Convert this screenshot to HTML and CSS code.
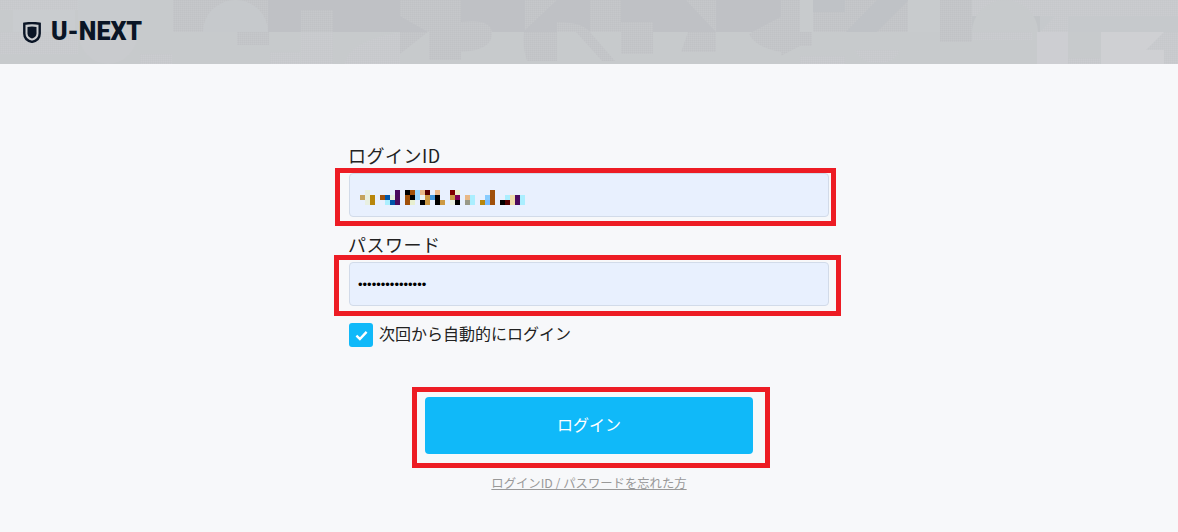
FILE: index.html
```html
<!DOCTYPE html>
<html lang="ja">
<head>
<meta charset="utf-8">
<title>U-NEXT ログイン</title>
<link rel="stylesheet" href="styles.css">
</head>
<body>
<header class="site-header">
  <svg class="header-art" viewBox="0 0 1178 64" preserveAspectRatio="none" aria-hidden="true">
    <defs>
      <pattern id="dither" width="2" height="2" patternUnits="userSpaceOnUse">
        <rect width="2" height="2" fill="#c3c5c8"/>
        <rect width="1" height="1" fill="#c0c2c5"/>
        <rect x="1" y="1" width="1" height="1" fill="#c6c8cb"/>
      </pattern>
      <pattern id="ditherlight" width="2" height="2" patternUnits="userSpaceOnUse">
        <rect width="2" height="2" fill="#c8cacd"/>
        <rect width="1" height="1" fill="#c6c8cb"/>
        <rect x="1" y="1" width="1" height="1" fill="#cbccd0"/>
      </pattern>
    </defs>
    <rect width="1178" height="64" fill="#c7cacc"/>
    <rect x="173" y="0" width="640" height="32" fill="#bfc1c5"/>
    <rect x="813" y="0" width="95" height="32" fill="#bfc2c6"/>
    <rect x="940" y="0" width="100" height="32" fill="#c1c4c7"/>
    <rect x="1040" y="0" width="138" height="32" fill="#c6c9cc"/>
    <rect x="0" y="0" width="78" height="10" fill="url(#ditherlight)"/>
    <rect x="13" y="10" width="62" height="22" fill="#c9cccf"/>
    <rect x="0" y="32" width="78" height="22" fill="url(#ditherlight)"/>
    <rect x="78" y="0" width="62" height="32" fill="#c8cbce"/>
    <path d="M78 32h60a30 32 0 0 1-60 0z" fill="#c9cbce"/>
    <rect x="140" y="54" width="32" height="10" fill="url(#ditherlight)"/>
    <rect x="173" y="0" width="95" height="32" fill="url(#dither)"/>
    <path d="M203 32a32.500 32 0 0 1 65 0z" fill="#c6c9cc"/>
    <rect x="237" y="32" width="32" height="13" fill="url(#dither)"/>
    <rect x="270" y="52" width="30" height="12" fill="url(#ditherlight)"/>
    <rect x="301" y="10" width="32" height="22" fill="url(#dither)"/>
    <rect x="301" y="32" width="32" height="32" fill="url(#ditherlight)"/>
    <path d="M345 64q2-22 55-32v32z" fill="url(#ditherlight)"/>
    <path d="M400 0h61v32h-61l28 0-28-16z" fill="url(#dither)"/>
    <path d="M400 32h28l-28 22z" fill="url(#dither)"/>
    <rect x="429" y="32" width="32" height="28" fill="url(#dither)"/>
    <path d="M461 52V22q31-4 31 12t-31 18z" fill="url(#dither)"/>
    <path d="M525 32V30L557 0h-32z" fill="url(#dither)"/>
    <path d="M557 22q25 0 33 10h-33z" fill="url(#dither)"/>
    <path d="M524 32h33v29h-30q-5-15-3-29z" fill="url(#dither)"/>
    <path d="M590 32l25 29h-13l-26-29z" fill="url(#dither)"/>
    <path d="M590 0h31v22h32v32h-32V32h-31z" fill="url(#dither)"/>
    <path d="M686 0h30v32z" fill="url(#dither)"/>
    <path d="M688 32h28v20h-35z" fill="url(#dither)"/>
    <path d="M781 17v35q-25-4-32-18 12-7 32-17z" fill="url(#dither)"/>
    <rect x="781" y="0" width="19" height="32" fill="url(#dither)"/>
    <path d="M781 32h19v14l-19 10z" fill="url(#dither)"/>
    <rect x="800" y="0" width="13" height="32" fill="#c8cbcd"/>
    <rect x="813" y="12" width="32" height="20" fill="url(#dither)"/>
    <rect x="845" y="0" width="63" height="32" fill="url(#dither)"/>
    <path d="M846 32L877 0h32L877 32z" fill="#bfc2c6"/>
    <rect x="800" y="32" width="12" height="14" fill="url(#dither)"/>
    <rect x="800" y="56" width="45" height="8" fill="url(#ditherlight)"/>
    <path d="M855 50h45q-5 13-22 13t-23-13z" fill="url(#ditherlight)"/>
    <rect x="908" y="0" width="32" height="32" fill="#c8cbcd"/>
    <rect x="940" y="0" width="32" height="42" fill="url(#dither)"/>
    <path d="M972 0h128v16h-128z" fill="url(#ditherlight)"/>
    <path d="M972 32a33 32 0 0 1 66 0z" fill="#c7cacc"/>
    <rect x="972" y="32" width="60" height="8" fill="url(#ditherlight)"/>
    <path d="M1040 32l15-16h13v16z" fill="url(#ditherlight)"/>
    <rect x="1100" y="0" width="78" height="16" fill="url(#ditherlight)"/>
    <rect x="1037" y="32" width="31" height="32" fill="#cdced2"/>
    <rect x="1101" y="32" width="63" height="32" fill="#cfd0d3"/>
    <path d="M1164 32l-18 18h18z" fill="url(#ditherlight)"/>
    <rect x="1164" y="32" width="14" height="32" fill="url(#ditherlight)"/>
    <rect x="1068" y="58" width="32" height="6" fill="url(#ditherlight)"/>
  </svg>
  <a class="logo" href="#">
    <svg class="logo-mark" viewBox="0 0 18 21" aria-hidden="true">
      <path d="M1.300 1.800Q9 .3 16.700 1.800V11.500C16.700 16.200 13 19 9 19.900 5 19 1.300 16.200 1.300 11.500Z" fill="none" stroke="#0a1526" stroke-width="2.400"/>
      <path d="M4.500 5Q9 4.200 13.500 5V11.500C13.500 14 11.500 15.800 9 16.600 6.500 15.800 4.500 14 4.500 11.500Z" fill="#0a1526"/>
    </svg>
    <span class="logo-text">U-NEXT</span>
  </a>
</header>

<main class="login">
  <form class="login-form">
    <label class="field-label" for="login-id">ログインID</label>
    <div class="field field-id">
      <input class="field-input" id="login-id" type="text" aria-label="ログインID">
      <svg class="mosaic" viewBox="0 0 165 15" aria-hidden="true">
        <g shape-rendering="crispEdges">
          <rect x="0" y="5" width="5" height="5" fill="#c4a25c"/>
          <rect x="5" y="0" width="5" height="15" fill="#e8efe0"/>
          <rect x="10" y="5" width="5" height="10" fill="#b8860b"/>
          <rect x="20" y="5" width="5" height="5" fill="#a0500a"/>
          <rect x="25" y="5" width="5" height="5" fill="#0055aa"/>
          <rect x="25" y="10" width="5" height="5" fill="#aaeeff"/>
          <rect x="30" y="5" width="5" height="5" fill="#e8efe0"/>
          <rect x="30" y="10" width="5" height="5" fill="#0055aa"/>
          <rect x="35" y="0" width="5" height="15" fill="#4b0a5f"/>
          <rect x="45" y="0" width="5" height="5" fill="#000000"/>
          <rect x="45" y="5" width="5" height="10" fill="#a0500a"/>
          <rect x="50" y="0" width="5" height="5" fill="#a0500a"/>
          <rect x="50" y="5" width="5" height="5" fill="#000000"/>
          <rect x="50" y="10" width="5" height="5" fill="#e8efd0"/>
          <rect x="55" y="0" width="5" height="10" fill="#99d5ff"/>
          <rect x="60" y="0" width="5" height="5" fill="#e8b888"/>
          <rect x="60" y="5" width="5" height="5" fill="#eef4f4"/>
          <rect x="60" y="10" width="5" height="5" fill="#000000"/>
          <rect x="65" y="0" width="5" height="5" fill="#550000"/>
          <rect x="65" y="5" width="5" height="10" fill="#cc9944"/>
          <rect x="70" y="5" width="5" height="5" fill="#4499dd"/>
          <rect x="75" y="0" width="5" height="5" fill="#e8b888"/>
          <rect x="75" y="5" width="5" height="10" fill="#000000"/>
          <rect x="80" y="10" width="5" height="5" fill="#cc9944"/>
          <rect x="90" y="0" width="5" height="5" fill="#800000"/>
          <rect x="90" y="5" width="5" height="5" fill="#cc9944"/>
          <rect x="90" y="10" width="5" height="5" fill="#e8efe0"/>
          <rect x="95" y="0" width="5" height="5" fill="#eeeecc"/>
          <rect x="95" y="5" width="5" height="5" fill="#800055"/>
          <rect x="95" y="10" width="5" height="5" fill="#000000"/>
          <rect x="105" y="5" width="5" height="5" fill="#e8b888"/>
          <rect x="105" y="10" width="5" height="5" fill="#999988"/>
          <rect x="110" y="5" width="5" height="10" fill="#aaeeff"/>
          <rect x="120" y="10" width="5" height="5" fill="#b8860b"/>
          <rect x="125" y="5" width="5" height="5" fill="#88ccff"/>
          <rect x="125" y="10" width="5" height="5" fill="#77bbff"/>
          <rect x="130" y="0" width="5" height="15" fill="#a0500a"/>
          <rect x="140" y="10" width="5" height="5" fill="#000000"/>
          <rect x="145" y="5" width="5" height="5" fill="#aaeeff"/>
          <rect x="145" y="10" width="5" height="5" fill="#550000"/>
          <rect x="150" y="5" width="5" height="10" fill="#eeddaa"/>
          <rect x="155" y="5" width="5" height="10" fill="#4b0a5f"/>
          <rect x="160" y="5" width="5" height="10" fill="#aaeeff"/>
        </g>
      </svg>
      <span class="frame frame-id"></span>
    </div>

    <label class="field-label field-label-second" for="password">パスワード</label>
    <div class="field field-password">
      <input class="field-input field-input-password" id="password" type="password" value="aaaaaaaaaaaaaaa">
      <span class="frame frame-password"></span>
    </div>

    <label class="remember">
      <span class="remember-box">
        <svg class="remember-check" viewBox="0 0 12 10" aria-hidden="true">
          <path d="M1.300 5.200 4.500 8.200 10.700 1.700" fill="none" stroke="#fff" stroke-width="2.200"/>
        </svg>
      </span>
      <span class="remember-text">次回から自動的にログイン</span>
    </label>

    <div class="submit-row">
      <button class="submit" type="button">ログイン</button>
      <span class="frame frame-submit"></span>
    </div>

    <a class="forgot" href="#">ログインID / パスワードを忘れた方</a>
  </form>
</main>
</body>
</html>
```

FILE: styles.css
```css
* {
  box-sizing: border-box;
}

html,
body {
  margin: 0;
  height: 100%;
  overflow: hidden;
}

body {
  background: #f7f8fa;
  color: #222;
  font-family: "Noto Sans CJK JP", "Noto Sans", sans-serif;
}

.site-header {
  position: relative;
  height: 64px;
  display: flex;
  align-items: center;
  padding-left: 23px;
}

.header-art {
  position: absolute;
  inset: 0;
  width: 100%;
  height: 100%;
  display: block;
}

.logo {
  position: relative;
  display: flex;
  align-items: center;
  gap: 10px;
  color: #0a1526;
  text-decoration: none;
}

.logo-mark {
  width: 18px;
  height: 21px;
  display: block;
}

.logo-text {
  font-family: Roboto, "Liberation Sans", sans-serif;
  font-weight: 900;
  font-size: 25px;
  line-height: 24px;
  letter-spacing: 0;
}

.login {
  display: flex;
  justify-content: center;
}

.login-form {
  width: 480px;
  padding-top: 78px;
  display: flex;
  flex-direction: column;
}

.field-label {
  display: block;
  font-size: 18px;
  line-height: 27px;
  height: 31px;
  letter-spacing: 0.5px;
  margin-left: -1px;
}

.field-label-second {
  margin-top: 14px;
}

.field {
  position: relative;
}

.field-input {
  display: block;
  width: 100%;
  height: 44px;
  padding: 0 8px;
  background: #e8f0fe;
  border: 1px solid #d2dbe9;
  border-radius: 4px;
  outline: none;
  font-family: "Liberation Sans", sans-serif;
  font-size: 13px;
}

.field-input-password {
  color: #000;
}

.mosaic {
  position: absolute;
  left: 11px;
  top: 17px;
  width: 165px;
  height: 15px;
  display: block;
}

.frame {
  position: absolute;
  border: 5px solid #ed1c24;
  pointer-events: none;
}

.frame-id {
  left: -14px;
  right: -7px;
  top: -5px;
  bottom: -9px;
}

.frame-password {
  left: -15px;
  right: -12px;
  top: -7px;
  bottom: -10px;
}

.remember {
  display: flex;
  align-items: center;
  gap: 6px;
  margin-top: 17px;
  font-size: 16px;
  line-height: 24px;
}

.remember-box {
  width: 24px;
  height: 24px;
  border-radius: 3px;
  background: #10b9f9;
  display: flex;
  align-items: center;
  justify-content: center;
}

.remember-check {
  width: 13px;
  height: 11px;
  display: block;
}

.remember-text {
  height: 24px;
  line-height: 20px;
}

.submit-row {
  position: relative;
  width: 328px;
  margin: 50px auto 0;
}

.submit {
  display: block;
  width: 100%;
  height: 57px;
  padding: 0 0 4px;
  border: 0;
  border-radius: 4px;
  background: #10b9f9;
  color: #fff;
  font-family: inherit;
  font-size: 16px;
}

.frame-submit {
  left: -13px;
  right: -17px;
  top: -10px;
  bottom: -14px;
}

.forgot {
  align-self: center;
  margin-top: 20px;
  color: #999;
  font-size: 12.35px;
  line-height: 18px;
  text-decoration: underline;
}
```
